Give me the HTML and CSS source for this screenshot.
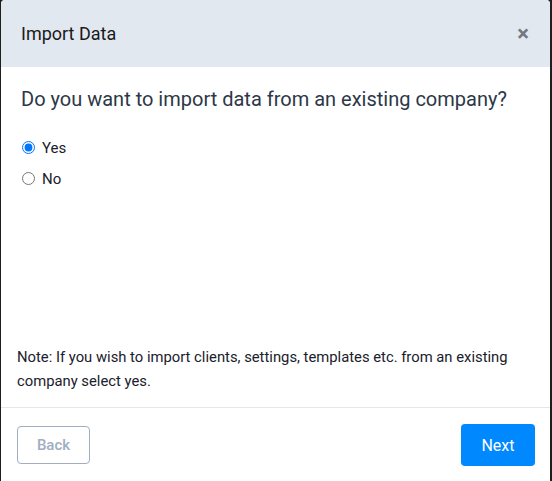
FILE: index.html
```html
<!DOCTYPE html>
<html>
<head>
<meta charset="utf-8">
<link rel="stylesheet" href="styles.css">
</head>
<body>
<div class="modal">
  <div class="modal-header">
    <h1 class="modal-title">Import Data</h1>
    <span class="close">&times;</span>
  </div>
  <div class="modal-body">
    <h2 class="question">Do you want to import data from an existing company?</h2>
    <label class="radio"><input type="radio" name="imp" checked> <span>Yes</span></label>
    <label class="radio"><input type="radio" name="imp"> <span>No</span></label>
    <div class="spacer"></div>
    <p class="note">Note: If you wish to import clients, settings, templates etc. from an existing company select yes.</p>
  </div>
  <div class="modal-footer">
    <button class="btn btn-back">Back</button>
    <button class="btn btn-next">Next</button>
  </div>
</div>
</body>
</html>
```
FILE: styles.css
```css
html, body {
  margin: 0;
  padding: 0;
  height: 100%;
}
body {
  background: #1f1f1f;
  font-family: Roboto, "Liberation Sans", sans-serif;
  overflow: hidden;
}
.modal {
  margin-left: 1px;
  width: 549px;
  height: 490px;
  background: #fff;
  border-radius: 4px 4px 0 0;
  display: flex;
  flex-direction: column;
  overflow: hidden;
}
.modal-header {
  height: 67px;
  flex: none;
  background: #e2e8f0;
  display: flex;
  align-items: center;
  justify-content: space-between;
  padding: 0 20px 0 20px;
  box-sizing: border-box;
}
.modal-title {
  margin: 0;
  font-size: 18px;
  font-weight: 400;
  color: #1a1a1a;
  padding-bottom: 1px;
}
.close {
  font-size: 22px;
  font-weight: 700;
  color: #74787c;
  line-height: 1;
  margin-right: 1px;
}
.modal-body {
  flex: 1;
  display: flex;
  flex-direction: column;
  padding: 20px 20px 0 20px;
}
.question {
  margin: 0 0 21px 0;
  font-size: 20px;
  font-weight: 400;
  color: #2d3748;
  line-height: 24px;
}
.radio {
  display: flex;
  align-items: center;
  height: 31px;
  font-size: 15px;
  color: #1a202c;
}
.radio input {
  margin: 0 7px 0 1px;
  width: 13px;
  height: 13px;
}
.spacer {
  height: 151px;
}
.note {
  margin: 0 0 13px -4px;
  font-size: 14.8px;
  line-height: 24px;
  color: #1a202c;
}
.modal-footer {
  flex: none;
  height: 83px;
  border-top: 1px solid #e6e6e6;
  display: flex;
  justify-content: space-between;
  align-items: flex-start;
  padding: 16px 16px 0 16px;
  box-sizing: border-box;
}
.btn {
  font-family: Roboto, "Liberation Sans", sans-serif;
  font-size: 15px;
  border-radius: 4px;
  cursor: pointer;
}
.btn-back {
  margin-top: 2px;
  width: 73px;
  height: 38px;
  background: #fff;
  border: 1px solid #a0aec0;
  color: #a0aec0;
  font-weight: 500;
}
.btn-next {
  width: 74px;
  height: 42px;
  background: #0088ff;
  border: none;
  color: #fff;
  font-size: 16px;
  margin-right: -1px;
}
```
